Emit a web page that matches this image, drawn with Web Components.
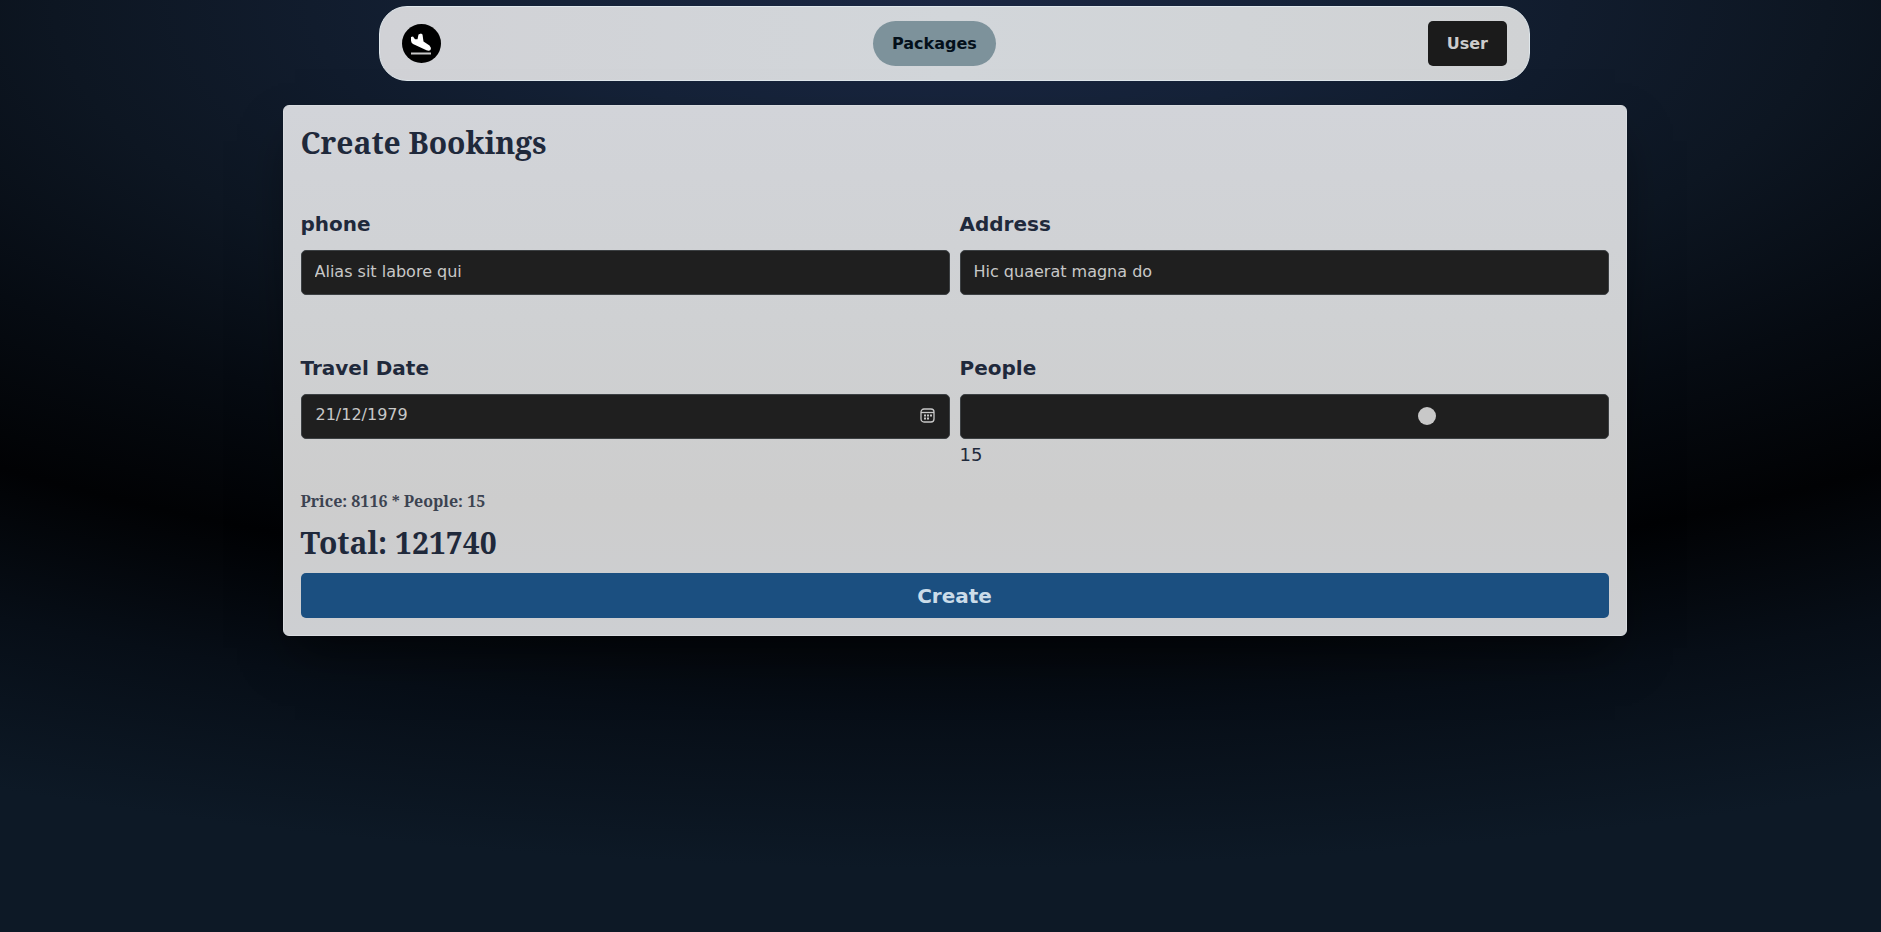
<!DOCTYPE html>
<html lang="en">
<head>
<meta charset="utf-8">
<meta name="viewport" content="width=device-width, initial-scale=1">
<title>Create Bookings</title>
<style>
  html { background: #0d1926; }
  body {
    margin: 0;
    min-height: 100vh;
    box-sizing: border-box;
    font-family: "DejaVu Sans", sans-serif;
    color: #1f293b;
    background: radial-gradient(124% 96% at 50% 0, #1b2743 0, #152238 16%, #0d1622 38%, #060b12 52%, #010204 66%, #070e17 80%, #0d1926 97%);
  }
</style>
</head>
<body>
<booking-page>
  <site-nav slot="nav"></site-nav>
  <booking-form></booking-form>
</booking-page>

<script>
class BaseElement extends HTMLElement {
  constructor() {
    super();
    this.attachShadow({ mode: "open" }).innerHTML = this.constructor.markup;
  }
}

customElements.define("booking-page", class extends BaseElement {
  static markup = `
    <style>
      :host { display: flex; flex-direction: column; align-items: center; gap: 24px; padding: 6px 0 24px 28px; }
      header { width: 90%; max-width: 1151px; }
      main { width: 96%; max-width: 1344px; }
    </style>
    <header><slot name="nav"></slot></header>
    <main><slot></slot></main>`;
});

customElements.define("site-logo", class extends BaseElement {
  static markup = `
    <style>
      :host { display: block; width: 39px; height: 39px; }
      a, svg { display: block; width: 100%; height: 100%; }
    </style>
    <a href="#" aria-label="Home">
      <svg viewBox="0 0 39 39" aria-hidden="true">
        <circle cx="19.500" cy="19.500" r="19.500" fill="#000"/>
        <path fill="#fff" d="M9 13 11 12.500 13 15.300 15.500 15.300 16.500 10.500 19 9.500 20.500 10.500 21.500 17.500 27.500 21.500Q29.500 23.500 28.500 26 27 27.200 24.500 26.300L11 20Q9 18.500 9 16.500Z"/>
        <path fill="#c8c8c8" d="M9 28.500H29V30.500H9Z"/>
      </svg>
    </a>`;
});

customElements.define("site-nav", class extends BaseElement {
  static markup = `
    <style>
      :host { display: block; }
      nav {
        box-sizing: border-box;
        display: flex; align-items: center; justify-content: space-between;
        padding: 14px 22px;
        border: 1px solid #dfe7ec;
        border-radius: 28px;
        background: linear-gradient(90deg, #d1d2d6, #d2d6da 50%, #d0d2d4);
      }
      a.tab {
        padding: 0 19px; border-radius: 24px;
        font-size: 16px; font-weight: 700; line-height: 45px;
        color: #04101a; background: #7d929b; text-decoration: none;
      }
      button {
        padding: 0 19px; border: 0; border-radius: 5px; height: 45px;
        font: 700 16px "DejaVu Sans", sans-serif;
        color: #cccccc; background: #1b1b1b;
      }
    </style>
    <nav>
      <site-logo></site-logo>
      <a class="tab" href="#packages">Packages</a>
      <button type="button">User</button>
    </nav>`;
});

const controlStyles = `
  input {
    box-sizing: border-box; display: block; width: 100%; height: 45px; margin: 0;
    padding: 0 13px 2px; border: 1px solid #3c4043; border-radius: 5px;
    font: 16px "DejaVu Sans", sans-serif; color: #c8c8c8; background: #1f1f1f;
  }
  label { display: block; margin-bottom: 12px; font-size: 20px; font-weight: 700; line-height: 28px; }`;

class TextField extends BaseElement {
  static markup = `
    <style>
      :host { display: block; }
      ${controlStyles}
    </style>
    <label for="control"></label>
    <input id="control" type="text">`;
  connectedCallback() {
    this.shadowRoot.querySelector("label").textContent = this.getAttribute("label");
    this.shadowRoot.querySelector("input").value = this.getAttribute("value");
  }
}
customElements.define("text-field", TextField);

customElements.define("date-field", class extends BaseElement {
  static markup = `
    <style>
      :host { display: block; }
      ${controlStyles}
      input { padding: 0 40px 4px 14px; }
      .box { display: grid; align-items: center; }
      .box > * { grid-area: 1 / 1; }
      button { justify-self: end; margin: 0 15px 2px 0; padding: 0; border: 0; background: none; width: 15px; height: 15px; }
      svg { display: block; }
    </style>
    <label for="control">Travel Date</label>
    <div class="box">
      <input id="control" type="text" inputmode="numeric" value="21/12/1979">
      <button type="button" aria-label="Open calendar">
        <svg width="15" height="15" viewBox="0 0 15 15" fill="none" stroke="#c8c8c8" aria-hidden="true">
          <rect x="1" y="1" width="13" height="13" rx="3" stroke-width="1.300"/>
          <path d="M1 4.500H14" stroke-width="1.300"/>
          <path d="M4 7.500H6M7 7.500H9M10 7.500H12M4 10.500H6M7 10.500H9" stroke-width="1.800"/>
        </svg>
      </button>
    </div>`;
});

customElements.define("people-field", class extends BaseElement {
  static markup = `
    <style>
      :host { display: block; }
      ${controlStyles}
      input { appearance: none; padding: 0 12px 2px; }
      input::-webkit-slider-thumb { appearance: none; width: 18px; height: 18px; border-radius: 50%; background: #c8c8c8; }
      input::-moz-range-thumb { width: 18px; height: 18px; border: 0; border-radius: 50%; background: #c8c8c8; }
      output { display: block; margin-top: 4px; font-size: 18px; line-height: 24px; }
    </style>
    <label for="control">People</label>
    <input id="control" type="range" min="1" max="20" value="15">
    <output for="control">15</output>`;
  connectedCallback() {
    const input = this.shadowRoot.querySelector("input");
    input.addEventListener("input", () => {
      this.shadowRoot.querySelector("output").value = input.value;
      this.dispatchEvent(new CustomEvent("people-change", { detail: Number(input.value) }));
    });
  }
});

customElements.define("booking-form", class extends BaseElement {
  static markup = `
    <style>
      :host { display: block; }
      form {
        box-sizing: border-box; padding: 17px;
        border: 1px solid #d9dce0; border-radius: 6px;
        background: linear-gradient(180deg, #d2d4d9, #cfd1d3 40%, #cdcdcd 75%, #cdcfd2);
        box-shadow: 0 24px 48px -12px rgba(0, 0, 0, .5);
      }
      h1, h2, p { margin: 0; font-family: "Noto Serif", "DejaVu Serif", serif; font-weight: 700; }
      h1, h2 { font-size: 30px; line-height: 40px; }
      p { font-size: 16px; line-height: 24px; color: #3c4351; }
      .fields { display: grid; grid-template-columns: 1fr 1fr; gap: 59px 10px; margin: 47px 0 22px; }
      .total { display: grid; gap: 10px; }
      button {
        height: 45px; border: 0; border-radius: 5px; padding: 0;
        font: 700 20px "DejaVu Sans", sans-serif; color: #cbdce9; background: #1b4f80;
      }
    </style>
    <form>
      <h1>Create Bookings</h1>
      <div class="fields">
        <text-field label="phone" value="Alias sit labore qui"></text-field>
        <text-field label="Address" value="Hic quaerat magna do"></text-field>
        <date-field></date-field>
        <people-field></people-field>
      </div>
      <div class="total">
        <p>Price: 8116 * People: 15</p>
        <h2>Total: 121740</h2>
        <button type="button">Create</button>
      </div>
    </form>`;
  connectedCallback() {
    const root = this.shadowRoot;
    root.querySelector("people-field").addEventListener("people-change", ({ detail }) => {
      root.querySelector("p").textContent = `Price: 8116 * People: ${detail}`;
      root.querySelector("h2").textContent = `Total: ${8116 * detail}`;
    });
  }
});
</script>
</body>
</html>
